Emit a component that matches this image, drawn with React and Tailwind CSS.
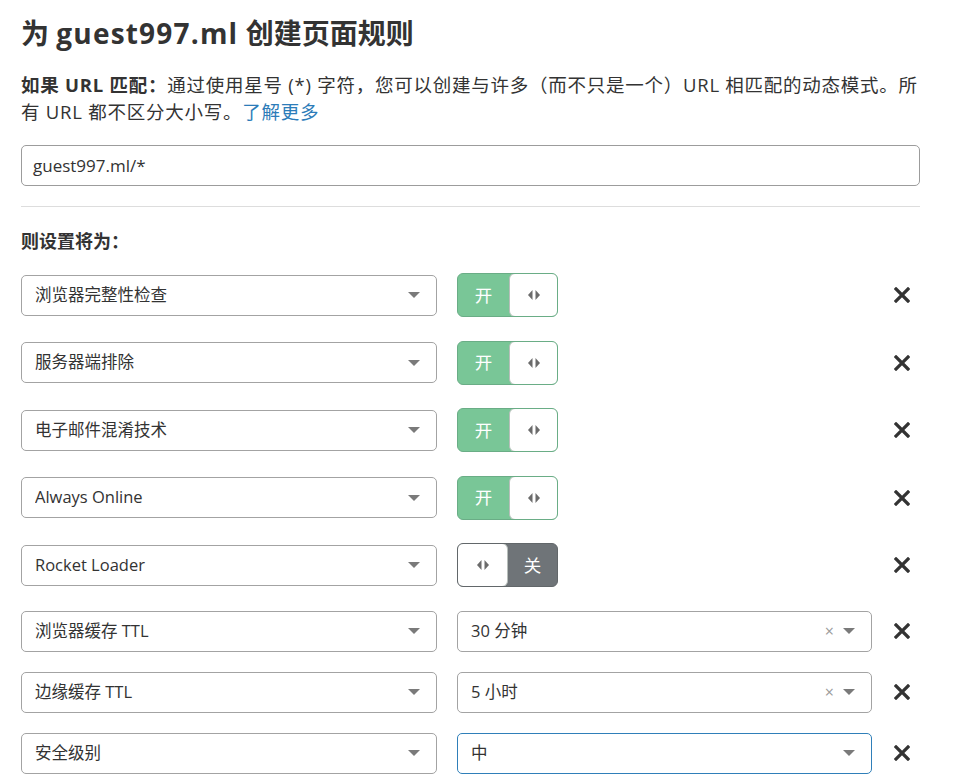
import React from "react"

const font = { fontFamily: '"Open Sans", "Noto Sans CJK SC", sans-serif' }

function Caret() {
  return (
    <svg width="12" height="6" viewBox="0 0 12 6" className="shrink-0">
      <path d="M0 0 L12 0 L6 6 Z" fill="#7a7a7a" />
    </svg>
  )
}

function Knob() {
  return (
    <svg width="12" height="10" viewBox="0 0 12 10">
      <path d="M4.5 0 L0 5 L4.5 10 Z" fill="#6b6b6b" />
      <path d="M7.5 0 L12 5 L7.5 10 Z" fill="#6b6b6b" />
    </svg>
  )
}

function CloseX() {
  return (
    <svg width="16" height="16" viewBox="0 0 16 16" className="ml-[22px] shrink-0">
      <path d="M2 2 L14 14 M14 2 L2 14" stroke="#333" strokeWidth="3.2" strokeLinecap="square" />
    </svg>
  )
}

function Select({ label, width = "w-[416px]", focus, clear }) {
  return (
    <div
      className={`${width} h-[41px] shrink-0 flex items-center rounded-[5px] border pl-[13px] pr-[16px] bg-white ${
        focus ? "border-[#2f7fb9]" : "border-[#a3a3a3]"
      }`}
    >
      <span className="flex-1 text-[16.5px] text-[#333] truncate">{label}</span>
      {clear && <span className="text-[#9a9a9a] text-[16px] leading-none mr-[9px]">×</span>}
      <Caret />
    </div>
  )
}

function Toggle({ on }) {
  if (on) {
    return (
      <div className="ml-[20px] w-[101px] h-[44px] flex rounded-[6px] bg-[#79c697] border border-[#6aad86] overflow-hidden">
        <div className="w-[51px] flex items-center justify-center text-white text-[17.5px]">开</div>
        <div className="flex-1 -my-px -mr-px flex items-center justify-center bg-white border border-[#b7beba] rounded-[6px]">
          <Knob />
        </div>
      </div>
    )
  }
  return (
    <div className="ml-[20px] w-[101px] h-[44px] flex rounded-[6px] bg-[#6f7478] border border-[#62676a] overflow-hidden">
      <div className="w-[51px] -my-px -ml-px flex items-center justify-center bg-white border border-[#b7beba] rounded-[6px]">
        <Knob />
      </div>
      <div className="flex-1 flex items-center justify-center text-white text-[17.5px]">关</div>
    </div>
  )
}

const toggles = [
  ["浏览器完整性检查", true],
  ["服务器端排除", true],
  ["电子邮件混淆技术", true],
  ["Always Online", true],
  ["Rocket Loader", false],
]

const selects = [
  ["浏览器缓存 TTL", "30 分钟", true, false],
  ["边缘缓存 TTL", "5 小时", true, false],
  ["安全级别", "中", false, true],
]

export default function App() {
  return (
    <div className="min-h-screen bg-white text-[#333] px-[21px] pt-[17px] w-[941px]" style={font}>
      <h1 className="text-[28px] font-bold leading-[1.2]">
        为 <span className="tracking-[1.2px]">guest997.ml</span> 创建页面规则
      </h1>
      <p className="mt-[20px] text-[18.5px] leading-[27px] tracking-[0.75px]">
        <span className="font-bold">如果 URL 匹配：</span>
        通过使用星号 (*) 字符，您可以创建与许多（而不只是一个）URL 相匹配的动态模式。所有 URL 都不区分大小写。
        <span className="text-[#2c7cb9]">了解更多</span>
      </p>
      <div className="mt-[20.5px] h-[41px] flex items-center rounded-[5px] border border-[#9c9c9c] pl-[11px] text-[17px] text-[#333]">
        guest997.ml/*
      </div>
      <div className="mt-[20px] border-t border-[#dddddd]" />
      <div className="mt-[22px] text-[18px] font-bold leading-[24px]">则设置将为：</div>

      <div className="mt-[20px]">
        {toggles.map(([label, on]) => (
          <div key={label} className="h-[44px] mb-[23.5px] flex items-center">
            <Select label={label} />
            <Toggle on={on} />
            <div className="w-[314px]" />
            <CloseX />
          </div>
        ))}
        {selects.map(([label, value, clear, focus]) => (
          <div key={label} className="h-[41px] mb-[20px] flex items-center">
            <Select label={label} />
            <div className="ml-[20px]">
              <Select label={value} width="w-[415px]" clear={clear} focus={focus} />
            </div>
            <CloseX />
          </div>
        ))}
      </div>
    </div>
  )
}
